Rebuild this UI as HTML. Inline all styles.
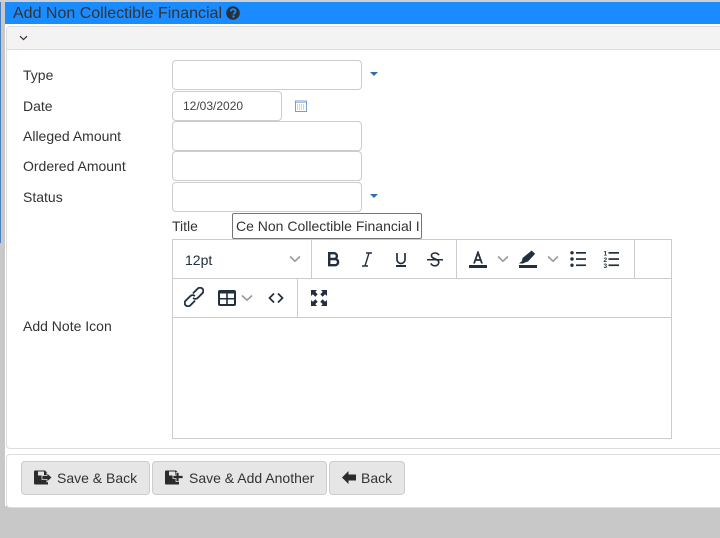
<!DOCTYPE html>
<html><head><meta charset="utf-8"><style>
html,body{margin:0;padding:0}
body{width:720px;height:538px;background:#c8c8c8;position:relative;overflow:hidden;font-family:"Liberation Sans",sans-serif;font-size:14px;color:#333}
.a{position:absolute}
.l{position:absolute;left:23px;line-height:20px;color:#333}
.i{position:absolute;box-sizing:border-box;border:1px solid #ccc;border-radius:4px;background:#fff}
.car{position:absolute;left:370px;width:0;height:0;border-left:4px solid transparent;border-right:4px solid transparent;border-top:4px solid #2f6fb0}
.btn{position:absolute;top:461px;height:34px;box-sizing:border-box;border:1px solid #ccc;border-radius:4px;background:#e6e6e6;line-height:32px;color:#333}
.btn span{position:absolute;top:0;white-space:nowrap}
svg{position:absolute}
</style></head><body>
<div class="a" style="left:0;top:0;width:720px;height:2px;background:#d0d0d0"></div>
<div class="a" style="left:0;top:2px;width:1px;height:241px;background:#4a80c0"></div>
<div class="a" style="left:5px;top:2px;width:715px;height:504px;background:#fff"></div>
<div class="a" style="left:5px;top:2px;width:715px;height:22px;background:#1a8cff;color:#333;font-size:16px;line-height:24px;text-indent:8px">Add Non Collectible Financial</div>
<svg style="left:226px;top:6px" width="14" height="14" viewBox="0 0 14 14"><circle cx="7" cy="7" r="6.800" fill="#2b2f36"/><path d="M4.600 5.500C4.700 4.100 5.800 3.200 7.100 3.200 8.500 3.200 9.600 4.100 9.600 5.400 9.600 6.900 7.600 7 7.600 8.500" fill="none" stroke="#1a8cff" stroke-width="1.800"/><rect x="6.400" y="9.500" width="2.100" height="2" fill="#1a8cff"/></svg>

<div class="a" style="box-sizing:border-box;left:6px;top:26px;width:720px;height:423px;border:1px solid #ddd;border-radius:4px;background:#fff"></div>
<div class="a" style="box-sizing:border-box;left:7px;top:27px;width:713px;height:23px;background:#f3f3f3;border-bottom:1px solid #ddd;border-radius:3px 0 0 0"></div>
<svg style="left:19px;top:35px" width="9" height="6" viewBox="0 0 9 6"><path d="M1 1.200L4.500 4.600 8 1.200" fill="none" stroke="#333" stroke-width="1.200"/></svg>

<div class="l" style="top:65px">Type</div>
<div class="i" style="left:172px;top:60px;width:190px;height:30px"></div>
<div class="car" style="top:72px"></div>

<div class="l" style="top:96px">Date</div>
<div class="i" style="left:172px;top:91px;width:110px;height:30px;font-size:12px;line-height:28px;padding-left:10px;color:#444">12/03/2020</div>
<svg style="left:295px;top:100px" width="12" height="12" viewBox="0 0 12 12"><rect x=".5" y="1" width="11" height="10.500" fill="#fff" stroke="#7b9cc8"/><rect x="1" y="2" width="10" height="1" fill="#a9bfdf"/><path d="M2 5h8M2 7h8M2 9h8" stroke="#8fa9cf" stroke-width=".9" stroke-dasharray="1 1"/></svg>

<div class="l" style="top:126px">Alleged Amount</div>
<div class="i" style="left:172px;top:121px;width:190px;height:30px"></div>

<div class="l" style="top:156px">Ordered Amount</div>
<div class="i" style="left:172px;top:151px;width:190px;height:30px"></div>

<div class="l" style="top:187px">Status</div>
<div class="i" style="left:172px;top:182px;width:190px;height:30px"></div>
<div class="car" style="top:194px"></div>

<div class="l" style="left:172px;top:216px">Title</div>
<div class="a" style="box-sizing:border-box;left:232px;top:213px;width:190px;height:26px;border:1px solid #767676;border-radius:2px;background:#fff;line-height:24px;padding-left:3px;overflow:hidden;white-space:nowrap;color:#333">Ce Non Collectible Financial I</div>

<div class="l" style="top:316px">Add Note Icon</div>

<!-- editor -->
<div class="a" style="box-sizing:border-box;left:172px;top:239px;width:500px;height:200px;border:1px solid #ccc;background:#fff"></div>
<div class="a" style="left:173px;top:278px;width:498px;height:1px;background:#ccc"></div>
<div class="a" style="left:173px;top:317px;width:498px;height:1px;background:#ccc"></div>
<div class="a" style="left:311px;top:240px;width:1px;height:38px;background:#ccc"></div>
<div class="a" style="left:456px;top:240px;width:1px;height:38px;background:#ccc"></div>
<div class="a" style="left:634px;top:240px;width:1px;height:38px;background:#ccc"></div>
<div class="a" style="left:297px;top:279px;width:1px;height:38px;background:#ccc"></div>
<div class="a" style="left:185px;top:250px;line-height:20px;color:#222f3e;font-size:14px">12pt</div>
<svg style="left:289px;top:255px" width="12" height="8" viewBox="0 0 12 8"><path d="M1 1.500L6 6.200 11 1.500" fill="none" stroke="#9a9a9a" stroke-width="1.600"/></svg>
<svg style="left:326px;top:251px" width="15" height="17" viewBox="0 0 15 17"><path d="M3.200 2.200h4.800a2.900 2.900 0 0 1 0 5.800H3.200zM3.200 8h5.800a3.100 3.100 0 0 1 0 6.200H3.200z" fill="none" stroke="#222f3e" stroke-width="2.400"/></svg>
<svg style="left:361px;top:251px" width="12" height="17" viewBox="0 0 12 17"><path d="M5 2h6M1 15h6M8 2L4 15" fill="none" stroke="#222f3e" stroke-width="1.400"/></svg>
<svg style="left:394px;top:251px" width="14" height="17" viewBox="0 0 14 17"><path d="M3 2v6.500a4 4 0 0 0 8 0V2" fill="none" stroke="#222f3e" stroke-width="1.700"/><rect x="2" y="14" width="10" height="2" fill="#222f3e"/></svg>
<svg style="left:427px;top:251px" width="16" height="17" viewBox="0 0 16 17"><path d="M12 4.200C11 2.500 9.500 2 8 2 6 2 4.400 3 4.400 4.800 4.400 8 11.800 7.500 11.800 11.400 11.800 13.500 10 14.800 8 14.800 6 14.800 4.600 14 3.800 12.400" fill="none" stroke="#222f3e" stroke-width="1.600"/><rect x="0" y="8" width="16" height="1.500" fill="#222f3e"/></svg>
<svg style="left:469px;top:251px" width="18" height="17" viewBox="0 0 18 17"><path d="M5 12.500L9 1.500 13 12.500M6.300 9h5.400" fill="none" stroke="#222f3e" stroke-width="1.800"/><rect x="0" y="14" width="18" height="3" fill="#222f3e"/></svg>
<svg style="left:497px;top:255px" width="12" height="8" viewBox="0 0 12 8"><path d="M1 1.500L6 6.200 11 1.500" fill="none" stroke="#9a9a9a" stroke-width="1.600"/></svg>
<svg style="left:519px;top:250px" width="18" height="18" viewBox="0 0 18 18"><path d="M0 13.500L3 11 3.500 8 11.500 1.500 12.500 .5 16 3.500 15.500 4.500 9 11.500 6 12.500 4 13.500z" fill="#222f3e"/><rect x="0" y="15" width="18" height="3" fill="#222f3e"/></svg>
<svg style="left:547px;top:255px" width="12" height="8" viewBox="0 0 12 8"><path d="M1 1.500L6 6.200 11 1.500" fill="none" stroke="#9a9a9a" stroke-width="1.600"/></svg>
<svg style="left:570px;top:251px" width="17" height="16" viewBox="0 0 17 16"><g fill="#222f3e"><circle cx="2" cy="1.800" r="1.700"/><circle cx="2" cy="8" r="1.700"/><circle cx="2" cy="14.200" r="1.700"/><rect x="6" y="1" width="10" height="1.700"/><rect x="6" y="7.200" width="10" height="1.700"/><rect x="6" y="13.400" width="10" height="1.700"/></g></svg>
<svg style="left:603px;top:250px" width="17" height="18" viewBox="0 0 17 18"><g fill="#222f3e"><rect x="5.500" y="2" width="10.500" height="1.700"/><rect x="5.500" y="8.200" width="10.500" height="1.700"/><rect x="5.500" y="14.400" width="10.500" height="1.700"/><text x="0.500" y="5.500" font-family="Liberation Sans" font-size="6.500" font-weight="bold">1</text><text x="0.500" y="11.800" font-family="Liberation Sans" font-size="6.500" font-weight="bold">2</text><text x="0.500" y="18" font-family="Liberation Sans" font-size="6.500" font-weight="bold">3</text></g></svg>

<svg style="left:184px;top:287px" width="20" height="20" viewBox="0 0 20 20"><g fill="none" stroke="#222f3e" stroke-width="1.800" stroke-linecap="round" transform="rotate(-45 10 10)"><path d="M7.500 13.300H1.500a3.300 3.300 0 0 1 0-6.600H8a3.300 3.300 0 0 1 3.200 2.600"/><path d="M12.500 6.700H18.500a3.300 3.300 0 0 1 0 6.600H12a3.300 3.300 0 0 1-3.200-2.600"/></g></svg>
<svg style="left:218px;top:290px" width="18" height="16" viewBox="0 0 18 16"><rect width="18" height="16" rx="2" fill="#222f3e"/><rect x="2" y="3.500" width="6.200" height="4.500" fill="#fff"/><rect x="9.800" y="3.500" width="6.200" height="4.500" fill="#fff"/><rect x="2" y="9.500" width="6.200" height="4.500" fill="#fff"/><rect x="9.800" y="9.500" width="6.200" height="4.500" fill="#fff"/></svg>
<svg style="left:241px;top:294px" width="12" height="8" viewBox="0 0 12 8"><path d="M1 1.500L6 6.200 11 1.500" fill="none" stroke="#9a9a9a" stroke-width="1.600"/></svg>
<svg style="left:268px;top:292px" width="16" height="12" viewBox="0 0 16 12"><path d="M6 1.500L1.500 6 6 10.500M10 1.500L14.500 6 10 10.500" fill="none" stroke="#222f3e" stroke-width="1.700"/></svg>
<svg style="left:311px;top:290px" width="16" height="16" viewBox="0 0 16 16"><g fill="#222f3e"><path d="M0 0h6L4.300 1.900 6.700 4.300 4.300 6.700 1.900 4.300 0 6z"/><path d="M16 0h-6L11.700 1.900 9.300 4.300 11.700 6.700 14.100 4.300 16 6z"/><path d="M0 16h6L4.300 14.100 6.700 11.700 4.300 9.300 1.900 11.700 0 10z"/><path d="M16 16h-6L11.700 14.100 9.300 11.700 11.700 9.300 14.100 11.700 16 10z"/></g></svg>

<!-- footer -->
<div class="a" style="box-sizing:border-box;left:6px;top:454px;width:720px;height:54px;border:1px solid #ddd;border-radius:4px;background:#fff"></div>
<div class="btn" style="left:21px;width:129px"><span style="left:35px">Save &amp; Back</span></div>
<svg style="left:34px;top:470px" width="18" height="15" viewBox="0 0 18 15"><path d="M0 1.500a1 1 0 0 1 1-1h10l3 3v11H1a1 1 0 0 1-1-1z" fill="#2b2b2b"/><rect x="4" y="1.500" width="6" height="4" fill="#e6e6e6"/><path d="M18 7.500l-5-4.500v2.500H8v4h5V12z" fill="#2b2b2b" stroke="#e6e6e6" stroke-width=".8"/></svg>
<div class="btn" style="left:152px;width:175px"><span style="left:36px">Save &amp; Add Another</span></div>
<svg style="left:165px;top:470px" width="19" height="15" viewBox="0 0 19 15"><path d="M0 1.500a1 1 0 0 1 1-1h10l3 3v11H1a1 1 0 0 1-1-1z" fill="#2b2b2b"/><rect x="4" y="1.500" width="6" height="4" fill="#e6e6e6"/><path d="M11 2.500h3v3h4v3h-4v3h-3v-3H8v-3h3z" fill="#2b2b2b" stroke="#e6e6e6" stroke-width=".8"/></svg>
<div class="btn" style="left:329px;width:76px"><span style="left:31px">Back</span></div>
<svg style="left:342px;top:471px" width="14" height="13" viewBox="0 0 14 13"><path d="M0 6.500L6.500 0v3.500H14v6H6.500V13z" fill="#2b2b2b"/></svg>
</body></html>
